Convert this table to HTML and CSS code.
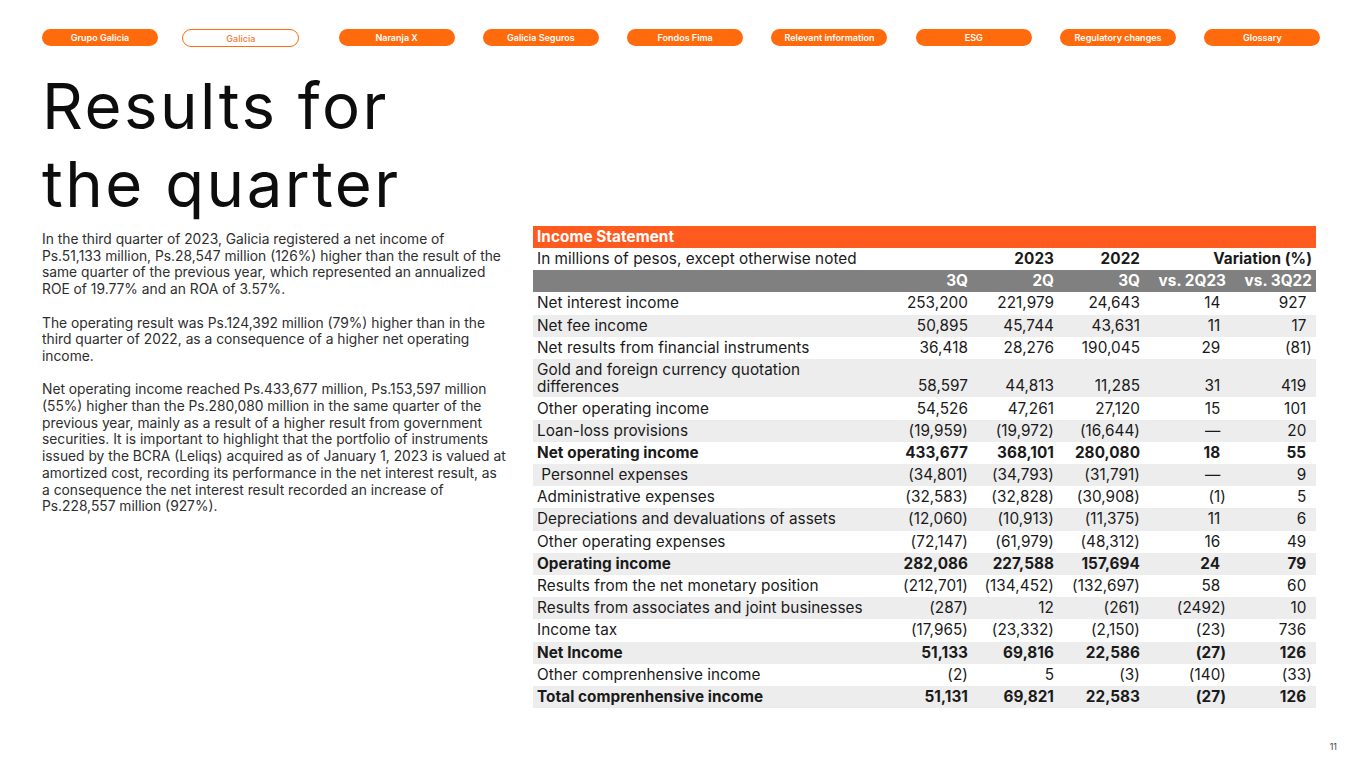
FILE: index.html
```html
<!DOCTYPE html>
<html lang="en">
<head>
<meta charset="utf-8">
<title>Results for the quarter</title>
<link rel="stylesheet" href="styles.css">
</head>
<body>
<div class="page">
  <nav class="nav">
    <a class="pill">Grupo Galicia</a>
    <a class="pill pill-active">Galicia</a>
    <a class="pill">Naranja X</a>
    <a class="pill">Galicia Seguros</a>
    <a class="pill">Fondos Fima</a>
    <a class="pill">Relevant information</a>
    <a class="pill">ESG</a>
    <a class="pill">Regulatory changes</a>
    <a class="pill">Glossary</a>
  </nav>
  <h1 class="title">Results for<br>the quarter</h1>
  <div class="content">
    <div class="text">
      <p>In the third quarter of 2023, Galicia registered a net income of Ps.51,133 million, Ps.28,547 million (126%) higher than the result of the same quarter of the previous year, which represented an annualized ROE of 19.77% and an ROA of 3.57%.</p>
      <p>The operating result was Ps.124,392 million (79%) higher than in the third quarter of 2022, as a consequence of a higher net operating income.</p>
      <p>Net operating income reached Ps.433,677 million, Ps.153,597 million (55%) higher than the Ps.280,080 million in the same quarter of the previous year, mainly as a result of a higher result from government securities. It is important to highlight that the portfolio of instruments issued by the BCRA (Leliqs) acquired as of January 1, 2023 is valued at amortized cost, recording its performance in the net interest result, as a consequence the net interest result recorded an increase of Ps.228,557 million (927%).</p>
    </div>
    <table class="fin">
      <colgroup>
        <col class="c-label"><col class="c-num"><col class="c-num"><col class="c-num"><col class="c-num"><col class="c-num">
      </colgroup>
      <thead>
        <tr class="r-title"><th colspan="6">Income Statement</th></tr>
        <tr class="r-years">
          <td class="lbl">In millions of pesos, except otherwise noted</td>
          <th></th><th>2023</th><th>2022</th><th colspan="2">Variation (%)</th>
        </tr>
        <tr class="r-q">
          <th></th><th>3Q</th><th>2Q</th><th>3Q</th><th>vs. 2Q23</th><th>vs. 3Q22</th>
        </tr>
      </thead>
      <tbody>
        <tr><td class="lbl">Net interest income</td><td>253,200</td><td>221,979</td><td>24,643</td><td>14<i>)</i></td><td>927<i>)</i></td></tr>
        <tr class="alt"><td class="lbl">Net fee income</td><td>50,895</td><td>45,744</td><td>43,631</td><td>11<i>)</i></td><td>17<i>)</i></td></tr>
        <tr><td class="lbl">Net results from financial instruments</td><td>36,418</td><td>28,276</td><td>190,045</td><td>29<i>)</i></td><td>(81)</td></tr>
        <tr class="alt tall"><td class="lbl">Gold and foreign currency quotation<br>differences</td><td>58,597</td><td>44,813</td><td>11,285</td><td>31<i>)</i></td><td>419<i>)</i></td></tr>
        <tr><td class="lbl">Other operating income</td><td>54,526</td><td>47,261</td><td>27,120</td><td>15<i>)</i></td><td>101<i>)</i></td></tr>
        <tr class="alt"><td class="lbl">Loan-loss provisions</td><td>(19,959)</td><td>(19,972)</td><td>(16,644)</td><td>—<i>)</i></td><td>20<i>)</i></td></tr>
        <tr class="bold"><td class="lbl">Net operating income</td><td>433,677</td><td>368,101</td><td>280,080</td><td>18<i>)</i></td><td>55<i>)</i></td></tr>
        <tr class="alt"><td class="lbl">&nbsp;Personnel expenses</td><td>(34,801)</td><td>(34,793)</td><td>(31,791)</td><td>—<i>)</i></td><td>9<i>)</i></td></tr>
        <tr><td class="lbl">Administrative expenses</td><td>(32,583)</td><td>(32,828)</td><td>(30,908)</td><td>(1)</td><td>5<i>)</i></td></tr>
        <tr class="alt"><td class="lbl">Depreciations and devaluations of assets</td><td>(12,060)</td><td>(10,913)</td><td>(11,375)</td><td>11<i>)</i></td><td>6<i>)</i></td></tr>
        <tr><td class="lbl">Other operating expenses</td><td>(72,147)</td><td>(61,979)</td><td>(48,312)</td><td>16<i>)</i></td><td>49<i>)</i></td></tr>
        <tr class="alt bold"><td class="lbl">Operating income</td><td>282,086</td><td>227,588</td><td>157,694</td><td>24<i>)</i></td><td>79<i>)</i></td></tr>
        <tr><td class="lbl">Results from the net monetary position</td><td>(212,701)</td><td>(134,452)</td><td>(132,697)</td><td>58<i>)</i></td><td>60<i>)</i></td></tr>
        <tr class="alt"><td class="lbl">Results from associates and joint businesses</td><td>(287)</td><td>12</td><td>(261)</td><td>(2492)</td><td>10<i>)</i></td></tr>
        <tr><td class="lbl">Income tax</td><td>(17,965)</td><td>(23,332)</td><td>(2,150)</td><td>(23)</td><td>736<i>)</i></td></tr>
        <tr class="alt bold"><td class="lbl">Net Income</td><td>51,133</td><td>69,816</td><td>22,586</td><td>(27)</td><td>126<i>)</i></td></tr>
        <tr><td class="lbl">Other comprenhensive income</td><td>(2)</td><td>5</td><td>(3)</td><td>(140)</td><td>(33)</td></tr>
        <tr class="alt bold"><td class="lbl">Total comprenhensive income</td><td>51,131</td><td>69,821</td><td>22,583</td><td>(27)</td><td>126<i>)</i></td></tr>
      </tbody>
    </table>
  </div>
  <footer class="footer">11</footer>
</div>
</body>
</html>
```

FILE: styles.css
```css
* { box-sizing: border-box; }
html, body { margin: 0; padding: 0; background: #fff; }
body { font-family: Inter, "Noto Sans", "Liberation Sans", sans-serif; color: #111; }

.page {
  width: 1365px;
  height: 768px;
  padding: 29px 0 0 42px;
  display: flex;
  flex-direction: column;
  overflow: hidden;
}

.nav { display: flex; gap: 28.3px; }
.pill {
  width: 116px;
  height: 17px;
  border-radius: 9px;
  background: #ff6a0d;
  color: #fff;
  font-size: 9px;
  font-weight: 600;
  display: flex;
  align-items: center;
  justify-content: center;
}
.pill-active {
  width: 117px;
  height: 18px;
  margin-left: -4px;
  margin-right: 11px;
  background: #fff;
  color: #f27a34;
  border: 1.3px solid #ff6a0d;
  font-weight: 500;
}

.title {
  margin: 20px 0 0 0;
  font-size: 63.5px;
  line-height: 78px;
  font-weight: 400;
  color: #0d0d0d;
  letter-spacing: 2.5px;
}

.content {
  margin-top: 3px;
  display: flex;
  align-items: flex-start;
  gap: 26px;
}

.text {
  width: 465px;
  padding-top: 5px;
  font-size: 13.8px;
  line-height: 16.7px;
  color: #2e2e2e;
}
.text p { margin: 0 0 16.7px 0; }

.fin {
  width: 783px;
  border-collapse: collapse;
  table-layout: fixed;
  font-size: 15.3px;
  letter-spacing: 0.05px;
  color: #1a1a1a;
}
.c-label { width: 353px; }
.c-num { width: 86px; }
.fin td, .fin th {
  height: 22.2px;
  padding: 0 4px;
  text-align: right;
  white-space: nowrap;
  line-height: 16px;
  vertical-align: middle;
}
.fin td.lbl { text-align: left; }
.fin i { font-style: normal; visibility: hidden; }

.r-title th {
  background: #ff5b1f;
  color: #fff;
  text-align: left;
  font-weight: 700;
  height: 22px;
}
.r-years th { font-weight: 700; }
.r-q th { background: #808080; color: #fff; font-weight: 700; }

.alt td { background: #ededed; }
.bold td { font-weight: 700; }
.tall td { height: 38.5px; vertical-align: bottom; padding-bottom: 3px; }
.tall td.lbl { white-space: normal; line-height: 17px; padding-bottom: 2px; }

.footer {
  margin-top: auto;
  padding: 0 28px 16px 0;
  text-align: right;
  font-size: 9px;
  line-height: 11px;
  color: #444;
}
```
